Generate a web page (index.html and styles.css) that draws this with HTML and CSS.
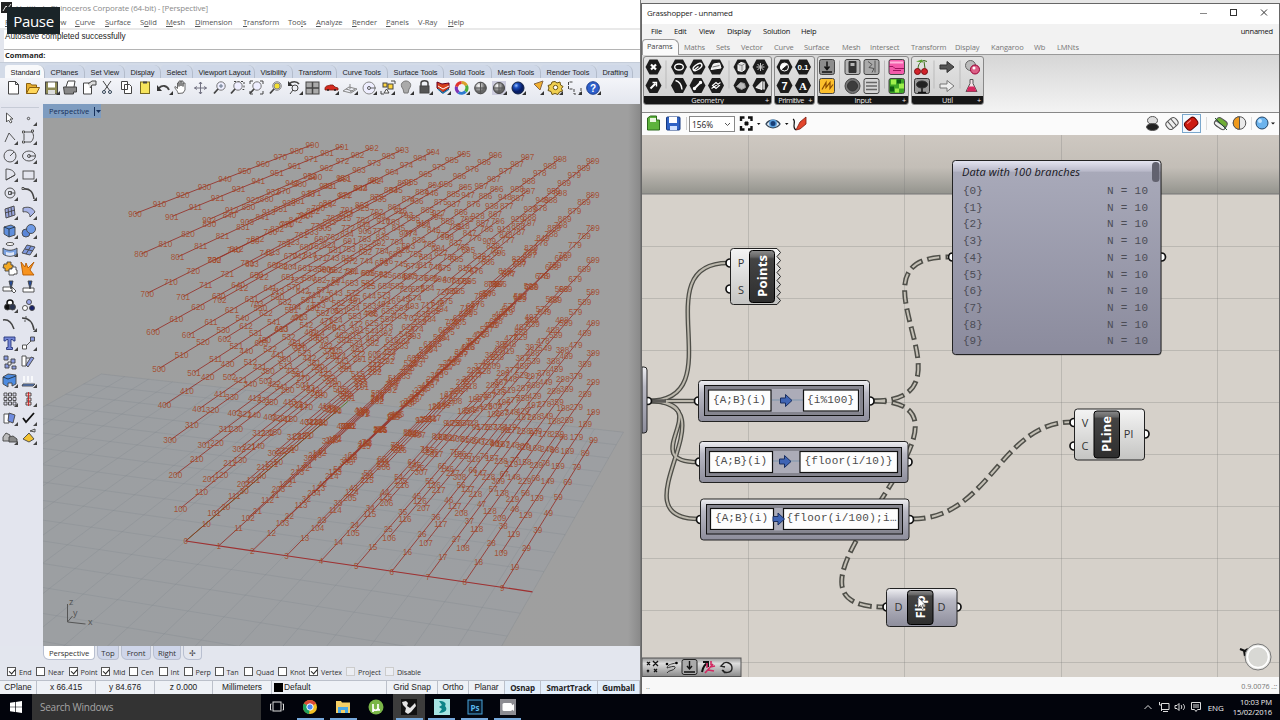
FILE: index.html
```html
<!DOCTYPE html>
<html lang="en">
<head>
  <meta charset="utf-8" />
  <title>Rhinoceros + Grasshopper</title>
  <link rel="stylesheet" href="styles.css">
</head>
<body>
  <div class="desktop">
    <div class="rhino">
      <div class="badge">Pause</div>
      <div class="rh-title"><svg width="11" height="11"><rect width="11" height="11" fill="#222"/><path d="M2 9L5 4l2 2 3-4" stroke="#ddd" fill="none"/></svg><span>Untitled - Rhinoceros Corporate (64-bit) - [Perspective]</span></div>
      <div class="rh-menu">
        <span><u>F</u>ile</span><span><u>E</u>dit</span><span><u>V</u>iew</span><span><u>C</u>urve</span><span><u>S</u>urface</span><span>S<u>o</u>lid</span><span><u>M</u>esh</span><span><u>D</u>imension</span><span><u>T</u>ransform</span><span>Too<u>l</u>s</span><span><u>A</u>nalyze</span><span><u>R</u>ender</span><span><u>P</u>anels</span><span>V-Ray</span><span><u>H</u>elp</span>
      </div>
      <div class="cmd">
        <div class="cmd-log">Autosave completed successfully</div>
        <div class="cmd-line">Command:</div>
      </div>
      <div class="rh-tabs">
        <span class="on">Standard</span><span>CPlanes</span><span>Set View</span><span>Display</span><span>Select</span><span>Viewport Layout</span><span>Visibility</span><span>Transform</span><span>Curve Tools</span><span>Surface Tools</span><span>Solid Tools</span><span>Mesh Tools</span><span>Render Tools</span><span>Drafting</span>
      </div>
      <div class="rh-tools">
        <svg width="636" height="27" viewBox="0 78 636 27" fill="none" stroke="#444">
          <path d="M8.500 81.500h7l3 3v9.500h-10zM15.500 81.500v3h3" fill="#fff"/>
          <path d="M26.500 93.500v-10h4l1 1.500h5v3" fill="#e8b030" stroke="#8a6010"/><path d="M26.500 93.500l3-6h10l-3 6z" fill="#ffd75a" stroke="#8a6010"/>
          <rect x="45.500" y="82" width="12" height="12" fill="#8d8a55"/><rect x="48" y="82.500" width="7" height="5" fill="#fff" stroke="none"/><rect x="48" y="90" width="7" height="4" fill="#ddd" stroke="none"/>
          <path d="M66 87l2-6h7l-1 6" fill="#fff"/><path d="M63.500 87h13v5h-3v2h-9z" fill="#888"/>
          <path d="M83.500 83h8v11h-8z" fill="#fff"/><path d="M88 84l4-3h4v4h-4l-2 3" fill="#ddd"/>
          <path d="M103 81l7 10M111 81l-7 10"/><circle cx="104" cy="92" r="1.500" stroke="#345"/><circle cx="110" cy="92" r="1.500" stroke="#345"/>
          <path d="M121.500 81.500h6v8h-6zM124.500 84.500h5l2 2v7h-7z" fill="#fff"/>
          <rect x="140.500" y="82" width="9" height="11.500" fill="#f6e45c" stroke="#776a20"/><path d="M143 82.500h4" stroke-width="2"/>
          <path d="M159 88c3-3 8-3 10 2" stroke-width="1.800"/><path d="M157 85v6h5z" fill="#333" stroke="none"/>
          <path d="M178 93.500c0-3-4-5-3-7l2.500 2v-5.500l1.500-.5v4-5.500h2v5-5h2v5.500-3.500h2v7l-2 3z" fill="#fff" stroke-width=".8"/>
          <path d="M200.500 82v12M194.500 88h12M199 84l1.500-2 1.500 2M199 92l1.500 2 1.500-2M197 86.500l-2.500 1.500 2.500 1.500M204 86.500l2.500 1.500-2.500 1.500" stroke="#667" stroke-width=".9"/>
          <g id="mag"><circle cx="221" cy="86" r="4.200" fill="#eef" stroke="#777"/><path d="M218 89l-4 4.500" stroke-width="1.800"/></g><path d="M219 86h4M221 84v4" stroke="#678"/>
          <path d="M234 81.500h10v8h-3" stroke-dasharray="2 1.500"/><use href="#mag" x="17"/>
          <path d="M250 84v-3h3M260 81h3v3M263 91v3h-3M253 94h-3v-3"/><use href="#mag" x="36"/>
          <use href="#mag" x="56"/><circle cx="277" cy="86" r="3" fill="#f4e030" stroke="#887"/>
          <path d="M289 84c3-3 8-3 10 0" stroke-width="1.600"/><path d="M288 81v5h5z" fill="#333" stroke="none"/><circle cx="295" cy="88" r="3"/><path d="M293 90l-3 4"/>
          <rect x="306" y="82" width="13" height="12" fill="#aaa"/><path d="M312.500 82v12M306 88h13" stroke-width="1.500"/>
          <path d="M325 88c1-3 4-2 5-3h3l2 2 3 1v2h-13z" fill="#d52b20" stroke="#7a1a10" stroke-width=".8"/><circle cx="328" cy="90" r="1" fill="#222" stroke="none"/><circle cx="335" cy="90" r="1" fill="#222" stroke="none"/>
          <path d="M343 91l6-4 8 2-6 4zM346 89l8 2.500M350 92l5-3M350 84v5" stroke="#888"/>
          <circle cx="369" cy="88" r="6" fill="#eef" stroke="#888"/><circle cx="369" cy="88" r="1.500" stroke="#555"/><path d="M370 88h6" stroke="#666"/>
          <path d="M391 81h4v3M381 91v3h3" /><rect x="383" y="83" width="4" height="4" fill="#ffd640"/><rect x="388" y="84" width="5" height="5" fill="#ffd640"/><path d="M384 93l2.500-4 2.500 4z" fill="#fff"/>
          <path d="M403 89c-4-5 0-8 3-8s7 3 3 8l-1 4h-4z" fill="#aaa" stroke="#777"/>
          <path d="M421 86v-3c0-3 7-3 7 0v3" stroke-width="1.500"/><rect x="420" y="86" width="9" height="7" fill="#555"/>
          <path d="M437 82l5 2 7-1v5l-7 5-5-5z" fill="#d5401c" stroke="#602"/><path d="M438 86l5 3 6-3" stroke="#fff"/><path d="M438 89l5 4 6-4" stroke="#27a" stroke-width="1.500"/>
          <g stroke-width="3"><path d="M461.500 82.500a5.500 5.500 0 0 1 5 3" stroke="#d9a12c"/><path d="M466.500 85.500a5.500 5.500 0 0 1-1 6" stroke="#4caf3c"/><path d="M465.500 91.500a5.500 5.500 0 0 1-7 1" stroke="#2d7bd1"/><path d="M458.500 92.500a5.500 5.500 0 0 1-2-6" stroke="#7a36b8"/><path d="M456.500 86.500a5.500 5.500 0 0 1 5-4" stroke="#e2342c"/></g>
          <circle cx="480.500" cy="88" r="5.800" fill="url(#gball)"/><path d="M480.500 82v12M475 88h11" stroke="#555"/>
          <rect x="492" y="81" width="14" height="14" fill="#ccd" stroke="none"/><circle cx="499" cy="88" r="5.500" fill="url(#gball)"/><path d="M499 82v12M494 88h11" stroke="#555"/>
          <circle cx="518" cy="88" r="6" fill="url(#bball)" stroke="#124"/>
          <path d="M534 84l9-3-3 9z" fill="#f2b030" stroke="#864"/>
          <path d="M555 81.500l2 1.500 3-1 .5 3 2.500 1.500-1.500 2 1 2.500-3 1-1.500 2.500-3-1-3 1-1-3-3-1 1-2.500-1-2.500 3-1 1-2.500z" fill="#f0cf50" stroke="#6b5312"/><circle cx="555.500" cy="87.500" r="2.200" fill="#fff" stroke="#6b5312"/>
          <path d="M572.500 82h-4v7h4M574 89v5h3M581 88v5h-3" stroke-dasharray="3 1"/>
          <circle cx="593" cy="88" r="6.300" fill="#2e5fcb" stroke="#173a8a"/>
          <text x="593" y="92" class="help">?</text>
          <path fill="#333" stroke="none" d="M60 95h-4l4-4zM173 95h-4l4-4zM303 95h-4l4-4zM339 95h-4l4-4zM358 95h-4l4-4zM377 95h-4l4-4zM395 95h-4l4-4zM414 95h-4l4-4zM433 95h-4l4-4zM451 95h-4l4-4zM470 95h-4l4-4zM507 95h-4l4-4zM526 95h-4l4-4zM544 95h-4l4-4zM563 95h-4l4-4zM582 95h-4l4-4zM601 95h-4l4-4z"/>
          <defs>
            <radialGradient id="gball" cx=".35" cy=".3"><stop offset="0" stop-color="#fff"/><stop offset="1" stop-color="#666"/></radialGradient>
            <radialGradient id="bball" cx=".35" cy=".3"><stop offset="0" stop-color="#9cc4ff"/><stop offset=".4" stop-color="#1b4fc0"/><stop offset="1" stop-color="#071d66"/></radialGradient>
          </defs>
        </svg>
      </div>
      <div class="work">
        <div class="side">
          <svg width="43" height="346" viewBox="0 104 43 346" fill="none" stroke="#444" stroke-width=".9">
            <path d="M1 107.500h38" stroke="#c3c7d2"/>
            <path d="M6.500 113v9l2-2 2 3 1.500-1-2-3h3z" fill="#fff"/><circle cx="28.500" cy="118.500" r="1.200"/>
            <path d="M5 142l4-9 6 7"/><path d="M24 132h8M24 142h7M32 132c3 4 1 8-1 10M24 134v6"/><path d="M22.500 131h2v2h-2zM31.500 130h2v2h-2zM22.500 141h2v2h-2z" fill="#fff"/>
            <circle cx="10" cy="156" r="6"/><path d="M10 156l4-4" /><ellipse cx="29" cy="156" rx="6.500" ry="5"/><circle cx="29" cy="156" r="1.500"/><path d="M29 156h6"/>
            <path d="M6 180v-11c6 0 9 3 9 6zM6 180l9-5"/><rect x="23" y="171" width="11" height="8"/>
            <circle cx="10" cy="193" r="5"/><path d="M10 193h5M8.500 191.500h3v3h-3z"/><path d="M23 189c7-1 10 3 11 10" stroke-width="1.600"/><path d="M22 187.500h2v2h-2z" fill="#fff"/>
            <path d="M5 209l9-3 1 9-9 3zM8 208l1 9M11 207l1 9M5 213l10-3" fill="#9aa6dc"/><path d="M23 208c6-2 10 0 12 4l-5 5c0-4-3-6-7-5z" fill="#a7b4e8"/>
            <path d="M4 227l7-2 4 2v8l-6 2-5-3z" fill="#5f8fdd"/><path d="M4 227l5 2 6-2M9 229v8" stroke="#234"/><circle cx="26" cy="233" r="4" fill="#5a86d8"/><circle cx="31" cy="229" r="4.500" fill="#6f9be6"/>
            <ellipse cx="10" cy="244" rx="4" ry="1.500" fill="#fff"/><path d="M3 248c4 3 10 3 14 0v6c-4 3-10 3-14 0z" fill="#7ba3e2"/><path d="M6 252c3 1 5 1 8 0v3c-3 1-5 1-8 0z" fill="#dfe7f7" stroke="none"/><path d="M22 253l5-8 8 2-5 8z" fill="#7f98dc"/><path d="M25 249l8 2M31 246l-5 8"/>
            <path d="M4 264h3v-2h4v3h2v4h-3v2H5v-3H3z" fill="#f2a823"/><path d="M9 269h3v-2h4v3h1v4h-3v1h-5z" fill="#fff"/><path d="M21 262l4 5 1-4 2 5 6-6-4 8 4 5H23z" fill="#f7931e" stroke="#b55a00"/>
            <path d="M3 287h9v4H3zM12 287l4 4-2 2-3-3" fill="#fff"/><path d="M9 281h4l-2 8z" fill="#234a9a"/><path d="M23 288h11v4H23z" fill="#fff"/><path d="M28 281h4l-2 8z" fill="#234a9a"/>
            <circle cx="10" cy="303" r="3" fill="#fff" stroke="#111" stroke-width="1.500"/><circle cx="7.500" cy="307" r="3" fill="#111"/><circle cx="12.500" cy="307" r="3" fill="#2b3550"/><circle cx="29" cy="302" r="2.500" fill="#9aa6e8"/><circle cx="25" cy="308" r="2.500" fill="#fff"/><circle cx="32" cy="308" r="2.500" fill="#16206a"/>
            <path d="M3 320c6-1 9 3 11 9" stroke-width="1.500"/><path d="M22 318c8 0 11 5 12 12" stroke-width="1.500"/><path d="M25 317h2M24 321h2"/>
            <path d="M4 337h11v4h-1.500l-1-1.500H11v8h1.500v2h-6v-2H8v-8H6.500l-1 1.500H4z" fill="#7587d8" stroke="#26357a"/><path d="M25 347l6-6"/><path d="M22.500 345h4v4h-4z" fill="#fff"/><path d="M30.500 337h4v4h-4z" fill="#8a9be0"/>
            <path d="M4 356h4v4H4zM11 359h4v4h-4zM5 364h4v4H5zM12 366h4v3h-4z" fill="#8a9be0"/><path d="M8 362h3v3H8z" fill="#fff"/><path d="M22 356h4v10h-4zM26 358h4" fill="#fff"/><path d="M34 358l-6 9-2-2 5-8z" fill="#8a9be0"/>
            <path d="M3 377l5-3 8 1v9l-4 2v-3H8v4l-5-3z" fill="#4d8be0"/><path d="M3 377l5 2 8-3" stroke="#234"/><path d="M23 384h12l-2 2H22z" fill="#5a86d8"/><path d="M24 382v-6M28 382v-6M32 382v-6" stroke="#fff" stroke-width="1.500"/>
            <path d="M4 393h3v3H4zM8.500 393h3v3h-3zM13 393h3v3h-3zM4 397.500h3v3H4zM8.500 397.500h3v3h-3zM13 397.500h3v3h-3zM4 402h3v3H4zM8.500 402h3v3h-3zM13 402h3v3h-3z" fill="#dde"/><path d="M26 393h5v3h-5zM27 398h4v3h-4zM26 402h5v3h-5z" fill="#fbb" /><path d="M28.500 392v14" stroke="#c22"/>
            <path d="M4 414h5v9H4z" fill="#fff"/><path d="M9 413l6 2-2 8-5-2z" fill="#6f8ce0"/><path d="M23 418l3 4 8-9" stroke="#111" stroke-width="1.800"/>
            <path d="M3 441v-4l3-4 4 2v6z" fill="#bbb"/><path d="M9 442v-5l4-1 4 3v3z" fill="#888"/><path d="M23 439l6-6 5 6-5 3z" fill="#f2c230"/><path d="M30 431l5-2v3z" fill="#ddd"/>
            <path fill="#444" stroke="none" d="M37 126v-4l-4 4zM18 145v-4l-4 4zM37 145v-4l-4 4zM18 164v-4l-4 4zM37 164v-4l-4 4zM18 182v-4l-4 4zM37 182v-4l-4 4zM18 201v-4l-4 4zM37 201v-4l-4 4zM18 220v-4l-4 4zM37 220v-4l-4 4zM18 239v-4l-4 4zM37 239v-4l-4 4zM18 257v-4l-4 4zM37 257v-4l-4 4zM18 313v-4l-4 4zM37 332v-4l-4 4zM18 351v-4l-4 4zM37 351v-4l-4 4zM18 388v-4l-4 4zM37 388v-4l-4 4zM18 407v-4l-4 4zM37 407v-4l-4 4zM18 426v-4l-4 4zM37 426v-4l-4 4zM18 445v-4l-4 4zM37 445v-4l-4 4z"/>
          </svg>
        </div>
        <div class="viewport">
          <div class="vp-label">Perspective<svg width="8" height="9"><path d="M.5 0v9" stroke="#16305a"/><path d="M2 3h5L4.500 6z" fill="#16305a"/></svg></div>
          <svg class="scene" id="scene" width="598" height="542" viewBox="43 104 598 542"></svg>
        </div>
      </div>
      <div class="view-tabs"><span class="on">Perspective</span><span>Top</span><span>Front</span><span>Right</span><span class="plus">✢</span></div>
      <div class="osnap">
        <label><b class="ck"></b>End</label><label><b></b>Near</label><label><b class="ck"></b>Point</label><label><b class="ck"></b>Mid</label><label><b></b>Cen</label><label><b></b>Int</label><label><b></b>Perp</label><label><b></b>Tan</label><label><b></b>Quad</label><label><b></b>Knot</label><label><b class="ck"></b>Vertex</label><label><b class="off"></b>Project</label><label><b class="off"></b>Disable</label>
      </div>
      <div class="rh-status">
        <span>CPlane</span><span>x 66.415</span><span>y 84.676</span><span>z 0.000</span><span>Millimeters</span><span class="layer"><i></i>Default</span><span>Grid Snap</span><span>Ortho</span><span>Planar</span><span class="b">Osnap</span><span class="b">SmartTrack</span><span class="b">Gumball</span>
      </div>
    </div>

    <div class="gh">
      <div class="gh-title"><span>Grasshopper - unnamed</span>
        <svg width="80" height="18" viewBox="1199 4 80 18" fill="none" stroke="#333"><path d="M1200 13.500h7" stroke="#888"/><rect x="1230.500" y="9.500" width="6" height="6"/><path d="M1261 9.500l6 6M1267 9.500l-6 6"/></svg>
      </div>
      <div class="gh-menu"><span>File</span><span>Edit</span><span>View</span><span>Display</span><span>Solution</span><span>Help</span><span class="doc">unnamed</span></div>
      <div class="gh-tabs"><span class="on">Params</span><span>Maths</span><span>Sets</span><span>Vector</span><span>Curve</span><span>Surface</span><span>Mesh</span><span>Intersect</span><span>Transform</span><span>Display</span><span>Kangaroo</span><span>Wb</span><span>LMNts</span></div>
      <div class="ribbon">
        <div class="panel geo">
          <svg width="126" height="39" viewBox="644.5 56.5 126 39" fill="none" stroke="#fff" stroke-width="1.400">
            <defs><path id="hex" d="M-8 0l4-7.500h8l4 7.500-4 7.500h-8z" fill="#1c1c1c" stroke="none"/></defs>
            <path d="M666.500 60v28M729.500 60v28" stroke="#bbb" stroke-width="1"/>
            <use href="#hex" x="654" y="66.500"/><use href="#hex" x="679.500" y="66.500"/><use href="#hex" x="698" y="66.500"/><use href="#hex" x="716.500" y="66.500"/><use href="#hex" x="742" y="66.500"/><use href="#hex" x="761" y="66.500"/>
            <use href="#hex" x="654" y="85"/><use href="#hex" x="679.500" y="85"/><use href="#hex" x="698" y="85"/><use href="#hex" x="716.500" y="85"/><use href="#hex" x="742" y="85"/><use href="#hex" x="761" y="85"/>
            <path d="M651.500 64l5 5M656.500 64l-5 5" stroke-width="2.200"/><ellipse cx="679.500" cy="66.500" rx="4.300" ry="3"/><ellipse cx="698" cy="66.500" rx="5" ry="2.500" transform="rotate(-35 698 66.500)"/><path d="M694 70l5-4"/><path d="M711.500 69l2.500-5.500 6-1 1.500 5z" fill="#eee" stroke-width="1"/><path d="M713 66.500l7-1.500" stroke="#555" stroke-width=".8"/><path d="M738.500 64l3-2 4 1v6l-3 2-4-1z" fill="#ddd" stroke-width="1"/><path d="M742.500 65v6M738.500 64l4 1 3-2" stroke="#777" stroke-width=".8"/><path d="M757 66.500h8M761 62.500v8M758 63.500l6 6M764 63.500l-6 6" stroke="#ccc" stroke-width="1"/>
            <path d="M651 88l5-5" stroke-width="2"/><path d="M653 82h4v4"/><path d="M676 80c4 1 6 4 6.500 9"/><path d="M695 88l6-6" stroke-width="1.800"/><circle cx="695" cy="88" r="1" fill="#fff"/><circle cx="701" cy="82" r="1" fill="#fff"/><path d="M713 85l3.500-3 3.500 3-3.500 3zM712 88l9-6" stroke-width="1.100"/><path d="M737 86l4-4 4 1 1 4-4 2z" fill="#bbb" stroke="#999" stroke-width="1"/><path d="M756.500 87l6-6v8z" fill="#ddd" stroke-width="1"/><path d="M764.500 81v8"/>
          </svg>
          <div class="cap">Geometry<i>+</i></div>
        </div>
        <div class="panel prim">
          <svg width="39" height="39" viewBox="775 56.500 39 39" fill="none" stroke="#fff">
            <use href="#hex" x="784.500" y="66.500"/><use href="#hex" x="803" y="66.500"/><use href="#hex" x="784.500" y="85"/><use href="#hex" x="803" y="85"/>
            <circle cx="784.500" cy="66.500" r="4"/><path d="M781 69a4 4 0 0 1 6-5z" fill="#fff"/><g class="hexchar"><text x="803" y="69.500">0.1</text><text x="784.500" y="89" class="big">7</text><text x="803" y="89" class="ser">A</text></g>
          </svg>
          <div class="cap">Primitive<i>+</i></div>
        </div>
        <div class="panel inp">
          <svg width="90" height="39" viewBox="818 56.500 90 39" fill="none" stroke="#333">
            <path d="M839.500 60v28M884.500 60v28" stroke="#bbb"/>
            <g fill="#b5b5b5" stroke="#444"><rect x="819.500" y="59" width="15" height="15" rx="2" fill="#8c8c8c"/><rect x="845" y="59" width="15" height="15" rx="2"/><rect x="864" y="59" width="15" height="15" rx="2" fill="#aaa"/><rect x="889" y="59" width="15.500" height="15" rx="2" fill="#f45bab"/><rect x="819.500" y="78" width="15" height="15" rx="2" fill="#fcbf2c"/><circle cx="852.500" cy="85.500" r="7.500" fill="#777"/><rect x="864" y="78" width="15" height="15" rx="2" fill="#d5d5d5"/><rect x="889" y="78" width="15.500" height="15" rx="2" fill="#3da526"/></g>
            <path d="M827 61v7M824.500 66l2.500 3 2.500-3M822 71.500h10" stroke="#111" stroke-width="1.500"/><path d="M849 61v11h7V61zM850 62h5v4h-5z" fill="#333"/><path d="M868 61l4 3-3 3 5 1-2 4M875 60v12" stroke="#555"/><path d="M889 66h4l2 2h9M893 70h8" stroke="#a01560"/><path d="M890 62h13" stroke="#ffb5dc" stroke-width="2"/>
            <path d="M822 89l4-7v5l4-5v6l3-4" stroke="#8a4a00" stroke-width="1.200"/><circle cx="852.500" cy="85.500" r="5" fill="#3c3c3c"/><path d="M866 82h11M866 85.500h11M866 89h11" stroke="#666" stroke-width="1.500"/><path d="M891 79h5v5h-5zM899 83h5v5h-5zM895 88h4v4h-4z" fill="#9df04c" stroke="none"/><path d="M897 79h4v4h-4zM890 86h4v5h-4z" fill="#0b5a12" stroke="none"/>
          </svg>
          <div class="cap">Input<i>+</i></div>
        </div>
        <div class="panel util">
          <svg width="71" height="39" viewBox="911 56.500 71 39" fill="none" stroke="#333">
            <path d="M933 60v28M959 60v28" stroke="#bbb"/>
            <path d="M917 69c0-5 2-8 6-9l3 1M923 61l1 7" stroke="#3b6a1c"/><circle cx="916.500" cy="71" r="3" fill="#d2222a" stroke="#7a0d12"/><circle cx="923.500" cy="71" r="3" fill="#d2222a" stroke="#7a0d12"/><path d="M915 61l6-2 1 3z" fill="#59a02c" stroke="none"/>
            <path d="M939 64.500h7V61l7 5.500-7 5.500v-3.500h-7z" fill="#555"/><path d="M939 83.500h7V80l7 5.500-7 5.500v-3.500h-7z" fill="#eee" stroke="#777"/>
            <circle cx="969.500" cy="65" r="5" fill="#bbb" stroke="#666"/><circle cx="974" cy="69" r="4.500" fill="#dc5f86" stroke="#903"/><circle cx="973" cy="67.500" r="1.500" fill="#fff" stroke="none"/>
            <rect x="913.500" y="78" width="15" height="15" rx="2" fill="#9a9a9a"/><path d="M921 92v-6M917 92h8" stroke="#111" stroke-width="1.500"/><ellipse cx="921" cy="84" rx="5.500" ry="3.500" fill="#222"/>
            <path d="M969 79v4l-4 8h11l-4-8v-4z" fill="#f3dfe5" stroke="#555"/><path d="M967.500 86l-2 5h10l-2-5z" fill="#d6285f" stroke="none"/>
          </svg>
          <div class="cap">Util<i>+</i></div>
        </div>
      </div>
      <div class="gh-bar">
        <svg width="45" height="20" viewBox="642 114 45 20"><path d="M647.500 130v-12l3-2h6v4h3v10z" fill="#5db33c" stroke="#2d6a1c"/><path d="M650 118h6v4h-6z" fill="#e8f6e0"/><rect x="666.500" y="117" width="13.500" height="13" rx="1" fill="#2f62c4" stroke="#143880"/><path d="M669 117h8v6h-8z" fill="#fff"/><path d="M670 126h7v4h-7z" fill="#cfe0ff"/><path d="M686.500 117v13" stroke="#ccc"/></svg>
        <div class="zoom">156%<svg width="7" height="5"><path d="M1 1l2.500 2.500L6 1" fill="none" stroke="#555"/></svg></div>
        <svg width="75" height="20" viewBox="737 114 75 20" fill="none" stroke="#111" stroke-width="2"><path d="M741 121v-3.500h3.500M748 117.500h3.500v3.500M751.500 126v3.500H748M744.500 129.500H741V126" stroke-width="2.400"/><path d="M745 122h3v3h-3z" fill="#111" stroke-width="1"/><path d="M757 123h3.500l-1.800 2zM785 123h3.500l-1.800 2z" fill="#111" stroke="none"/><path d="M766 124c3-5 11-5 14 0-3 5-11 5-14 0z" fill="#dce9f7" stroke="#345" stroke-width="1.400"/><circle cx="773" cy="123.500" r="3.200" fill="#173f78" stroke="#5aa0dd" stroke-width="1.400"/><path d="M793 119c4 2-2 8 3 11" stroke-width="1.200"/><path d="M796 130l4-8 6-5v7l-6 5z" fill="#e3462c" stroke="#7a1a10" stroke-width=".8"/></svg>
        <svg class="right" width="136" height="20" viewBox="1143 114 136 20" stroke="#555">
          <ellipse cx="1152.500" cy="120.500" rx="5" ry="4" fill="#ddd"/><ellipse cx="1152.500" cy="127" rx="6" ry="3.500" fill="#222"/>
          <g transform="rotate(-40 1172 123.500)"><rect x="1166" y="119" width="12" height="9" rx="3.500" fill="#eee"/><path d="M1170 119v9M1174 119v9"/></g>
          <rect x="1182.500" y="114.500" width="18" height="18" fill="#f3f9ff" stroke="#7aa7cc"/><g transform="rotate(-40 1191 123.500)"><rect x="1184.500" y="119" width="13" height="9.500" rx="3.500" fill="#cc1c12" stroke="#600"/><path d="M1188 121h5" stroke="#f88"/></g>
          <path d="M1206.500 117v13M1251.500 117v13" stroke="#ddd"/>
          <g transform="rotate(35 1221 123.500)"><rect x="1215" y="119" width="12" height="9" rx="3.500" fill="#6fae35"/><path d="M1215 124h12v2q0 2-3 2h-6q-3 0-3-2z" fill="#eee"/></g><path d="M1215 118l12 12" stroke="#253"/>
          <circle cx="1239.500" cy="123" r="6.300" fill="#e9e9e9"/><path d="M1239.500 116.700a6.300 6.300 0 0 0 0 12.600z" fill="#f09a1c"/>
          <circle cx="1262" cy="123" r="6" fill="#6cb4ee" stroke="#246"/><circle cx="1260" cy="121" r="2" fill="#c5e5ff" stroke="none"/><path d="M1271 122.500h4l-2 2z" fill="#111" stroke="none"/>
        </svg>
      </div>
      <div class="canvas">
        <svg width="637" height="542" viewBox="642 135 637 542">
          <defs>
            <linearGradient id="edge" x2="0" y2="1"><stop offset="0" stop-color="#cec8c1"/><stop offset=".55" stop-color="#c3beb7"/><stop offset="1" stop-color="#93938d"/></linearGradient>
            <linearGradient id="sel" x2="0" y2="1"><stop offset="0" stop-color="#f0f0f3"/><stop offset=".3" stop-color="#b9b9c4"/><stop offset="1" stop-color="#8d8d9b"/></linearGradient>
            <linearGradient id="pan" x2="0" y2="1"><stop offset="0" stop-color="#e6e6f2"/><stop offset=".055" stop-color="#b9b9c9"/><stop offset=".06" stop-color="#a8a9b9"/><stop offset="1" stop-color="#8b8b9d"/></linearGradient>
            <linearGradient id="comp" x2="0" y2="1"><stop offset="0" stop-color="#f4f4f4"/><stop offset="1" stop-color="#c4c4c2"/></linearGradient>
            <linearGradient id="blk" x2="0" y2="1"><stop offset="0" stop-color="#8c8c8c"/><stop offset=".12" stop-color="#666"/><stop offset=".16" stop-color="#444"/><stop offset="1" stop-color="#2e2e2e"/></linearGradient>
            <linearGradient id="mbar" x2="0" y2="1"><stop offset="0" stop-color="#999"/><stop offset=".3" stop-color="#ddd"/><stop offset="1" stop-color="#8a8a8a"/></linearGradient>
            <path id="arrow" d="M-5.500-2.500h5V-6L6 0-.5 6V2.500h-5z" fill="#3f64b4" stroke="#1a2f60"/>
            <path id="w1" d="M648 401C735 401 642 263 728 263"/><path id="w2" d="M648 401h50"/><path id="w3" d="M648 401C722 401 633 462 698 462"/><path id="w4" d="M648 401C738 401 612 519 699 519"/>
            <path id="d1" d="M873 401C986 401 838 257 948 257"/><path id="d2" d="M873 401C1015 401 742 607 884 607"/><path id="d3" d="M912 519C990 519 1000 422 1072 422"/>
          </defs>
          <path class="grid" d="M748.500 135v542M904.500 135v542M1061.500 135v542M1217.500 135v542M642 246.500h637M642 298.500h637M642 350.500h637M642 402.500h637M642 454.500h637M642 506.500h637M642 558.500h637M642 610.500h637M642 662.500h637"/>
          <rect x="642" y="135" width="637" height="59" fill="url(#edge)"/><path d="M642 194h637" stroke="#777"/><path class="grid" d="M748.500 135v59M904.500 135v59M1061.500 135v59M1217.500 135v59"/>

          <g class="wire"><use href="#w1"/><use href="#w2"/><use href="#w3"/><use href="#w4"/></g>
          <g class="wire in"><use href="#w1"/><use href="#w2"/><use href="#w3"/><use href="#w4"/></g>
          <path d="M648 401h18" stroke="#333" stroke-width="3.500" opacity=".7"/>
          <g class="wire dash"><use href="#d1"/><use href="#d2"/><use href="#d3"/></g>
          <g class="wire in dash"><use href="#d1"/><use href="#d2"/><use href="#d3"/></g>

          <g class="grips"><circle cx="648" cy="401" r="3.500"/><circle cx="730" cy="263" r="4"/><circle cx="730" cy="289" r="4"/><circle cx="698.500" cy="401" r="4"/><circle cx="870" cy="401" r="4"/><circle cx="699.500" cy="462" r="4"/><circle cx="908" cy="462" r="4"/><circle cx="700.500" cy="519.500" r="4"/><circle cx="909.500" cy="519.500" r="4"/><circle cx="887" cy="607" r="4"/><circle cx="957" cy="607" r="4"/><circle cx="1074" cy="422.500" r="4"/><circle cx="1074" cy="446" r="4"/><circle cx="1145" cy="434" r="4"/><circle cx="952.500" cy="257" r="4"/><circle cx="1161.500" cy="257" r="4"/></g>

          <path d="M642 367h2q3 0 3 3v60q0 3-3 3h-2z" fill="url(#sel)" stroke="#222"/>

          <path d="M733.500 248.500H777l3.500 4-3.500 4 3.500 4-3.500 4 3.500 4-3.500 4 3.500 4-3.500 4 3.500 4-3.500 4 3.500 4-3.500 4 3.500 4-3.500 4H733.500q-3 0-3-3v-50q0-3 3-3z" fill="url(#comp)" stroke="#222"/>
          <rect x="749.500" y="250.500" width="25" height="52" rx="3" fill="url(#blk)" stroke="#000"/>
          <g class="port"><text x="741" y="267">P</text><text x="741" y="293.500">S</text></g>
          <text class="comp" transform="translate(766.500 276) rotate(-90)" textLength="42">Points</text>

          <g stroke="#222" fill="url(#sel)"><rect x="698.500" y="380.500" width="171" height="41" rx="3"/><rect x="699.500" y="441.500" width="208.500" height="41" rx="3"/><rect x="700.500" y="499" width="208.500" height="41" rx="3"/></g>
          <g stroke="#111" fill="#85858f"><rect x="704.500" y="385.500" width="159" height="30"/><rect x="705.500" y="447.500" width="196" height="29"/><rect x="706.500" y="504.500" width="196" height="29.500"/></g>
          <g fill="#acacb8"><rect x="708" y="389" width="152" height="23"/><rect x="709" y="451" width="189" height="22"/><rect x="710" y="508" width="189" height="22.500"/></g>
          <path d="M772 400h31M773 461h27" stroke="#7d95ad"/>
          <g fill="#fdfdfd" stroke="#111" stroke-width="1.200"><rect x="708.500" y="390" width="62.500" height="21"/><rect x="803.500" y="390" width="55" height="21"/><rect x="709.500" y="451.500" width="63" height="21"/><rect x="800" y="451.500" width="97.500" height="21"/><rect x="710.500" y="508.500" width="63" height="21"/><rect x="783.500" y="508.500" width="115" height="21"/></g>
          <use href="#arrow" x="786" y="400.500"/><use href="#arrow" x="785" y="461.500"/><use href="#arrow" x="778.500" y="519"/>
          <g class="mono"><text x="713" y="403" textLength="53">{A;B}(i)</text><text x="807" y="403" textLength="47">{i%100}</text><text x="714" y="464" textLength="53">{A;B}(i)</text><text x="804.500" y="464" textLength="88">{floor(i/10)}</text><text x="715" y="521" textLength="53">{A;B}(i)</text><text x="786.500" y="521" textLength="110">{floor(i/100);i…</text></g>

          <rect x="886.500" y="588.500" width="70.500" height="38" rx="3" fill="url(#sel)" stroke="#222"/><rect x="907.500" y="590.500" width="25.500" height="34" rx="3" fill="url(#blk)" stroke="#000"/>
          <g class="port"><text x="898.500" y="611">D</text><text x="941.500" y="611">D</text></g>
          <text class="comp" transform="translate(925 607) rotate(-90)" textLength="23">Flip</text>
          <path d="M918 597v11l2.500-2.500 2 4 1.500-1-2-3.500h3.500z" fill="#fff" stroke="#333" stroke-width=".6"/>

          <rect x="1074.500" y="409" width="70" height="51" rx="3" fill="url(#comp)" stroke="#222"/><rect x="1094" y="411" width="25.500" height="47" rx="3" fill="url(#blk)" stroke="#000"/>
          <g class="port"><text x="1085" y="426.500">V</text><text x="1085" y="450">C</text><text x="1128.500" y="438">Pl</text></g>
          <text class="comp" transform="translate(1111 434) rotate(-90)" textLength="36">PLine</text>

          <rect x="953.500" y="161.500" width="208" height="194" rx="3" fill="#000" opacity=".25"/>
          <rect x="952.500" y="160.500" width="208.500" height="194" rx="3" fill="url(#pan)" stroke="#222"/>
          <rect x="1152" y="162" width="7.500" height="20" rx="3.500" fill="#62626f"/>
          <text class="ptitle" x="962" y="176" textLength="118">Data with 100 branches</text>
          <g class="mono pdata" id="branches"></g>

          <g class="mb"><rect x="642" y="658" width="99" height="18.500" fill="url(#mbar)" stroke="#555"/>
            <path d="M647 662l3 3M650 662l-3 3M653 661l5 5M658 661l-5 5M647 670l2 2M654 669l3 3M657 669l-3 3M649 670l-2 2" stroke="#111" stroke-width="1.300"/>
            <path d="M667 673c1-3 7-2 8-5s-5-1-8 0c1-4 5-4 9-5" stroke="#333" fill="none"/><circle cx="676.500" cy="663" r="1.300"/><circle cx="667" cy="664" r="1.300"/>
            <rect x="682" y="659.500" width="15" height="15" rx="2" fill="#aaa" stroke="#222"/><path d="M689.500 661v7M687 666l2.500 3 2.500-3M684 672h11" stroke="#111" fill="none" stroke-width="1.400"/>
            <path d="M702 672c1-5 3-8 6-9M703 662l5 0v5" stroke="#111" stroke-width="2" fill="none"/><path d="M705 673l8-9M708 670l6 1M710 667l5-1M707 668v-5M711 665v-4" stroke="#d22a62" stroke-width="1.600"/>
            <path d="M722 665c3-5 10-2 10 3s-8 6-9 2M724 663l-3 3 4 1M725 673l-3-3" stroke="#222" fill="none" stroke-width="1.400"/></g>
          <path d="M1240 649l5 2 3-2M1244 650l1 6M1246 652l6-5" stroke="#111" stroke-width="2.200" fill="none"/>
          <circle cx="1258" cy="657" r="13" fill="#e9e9e6" stroke="#777"/><circle cx="1258" cy="657" r="10.500" fill="#d8d8d4" stroke="#fff" stroke-width="1.500"/>
        </svg>
      </div>
      <div class="gh-status"><span>..</span><span>0.9.0076 <em>.::</em></span></div>
    </div>
  </div>

  <div class="taskbar">
    <div class="start"><svg width="12" height="12" fill="#fff"><path d="M0 1.700l5-.7v4.700H0zM5.700.9L12 0v5.700H5.700zM0 6.300h5V11l-5-.7zM5.700 6.300H12V12l-6.300-.9z"/></svg></div>
    <div class="search">Search Windows</div>
    <div class="apps">
      <div class="app"><svg width="16" height="16" fill="none" stroke="#ddd"><rect x="4" y="3" width="8" height="9"/><path d="M2.500 5h-1v6h1M13.500 5h1v6h-1"/></svg></div>
      <div class="app run"><svg width="16" height="16"><circle cx="8" cy="8" r="7" fill="#f2c022"/><path d="M8 8L1.900 4.500A7 7 0 0 1 14.100 4.500z" fill="#dc4a38"/><path d="M8 8L1.900 4.500A7 7 0 0 0 7 15z" fill="#1fa15d"/><circle cx="8" cy="8" r="3.200" fill="#4a8af4" stroke="#fff"/></svg></div>
      <div class="app run"><svg width="16" height="16"><path d="M1 2h5l1 1.500h8V14H1z" fill="#f5cf66"/><path d="M3 14V8h10v6h-3v-3H6v3z" fill="#4aa8e6"/></svg></div>
      <div class="app"><svg width="16" height="16"><circle cx="8" cy="8" r="7.500" fill="#7ab648"/><path d="M5 13V5v4c0 3 5 3 5 0V5M10 9c0 2 1 2 2 2" stroke="#fff" stroke-width="1.700" fill="none"/></svg></div>
      <div class="app run cur"><svg width="16" height="16"><rect width="16" height="16" fill="#111"/><path d="M1 3l4-1 2 2-1 3 3 2 5-5 1 3-5 6-3 2-3-2 1-4-3-3z" fill="#e4e4e4"/></svg></div>
      <div class="app run"><svg width="16" height="16"><rect width="16" height="16" fill="#a6e3e2"/><path d="M5 2c5 0 8 2 6 5 3 3 1 7-6 7l3-4-3-2 3-2z" fill="#0b8387"/></svg></div>
      <div class="app run"><svg width="16" height="16"><rect x="1" y="1" width="14" height="14" fill="#071a2c" stroke="#4aa6dd"/><text x="8" y="11.500" class="ps">Ps</text></svg></div>
      <div class="app run"><svg width="16" height="16"><rect width="16" height="16" fill="#8c8c92"/><rect x="2.500" y="4" width="9.500" height="8" rx="1.500" fill="#fff"/><path d="M11 7l3-2v7l-3-2z" fill="#fff"/></svg></div>
    </div>
    <div class="tray">
      <svg width="60" height="16" viewBox="1143 699 60 16" fill="none" stroke="#ddd"><path d="M1144.500 709l3.500-3.500 3.500 3.500"/><path d="M1161.500 703.500h7.500v6h-7.500zM1163 711.500h5M1159.500 702v3h2v6" /><path d="M1175 705.500h2l2-2v7l-2-2h-2zM1181 705c1 1 1 3 0 4M1183 704c2 2 2 4 0 6"/><path d="M1191.500 702.500h9v7h-3l-1.500 2-1.500-2h-3zM1193 705h6M1193 707h6"/></svg>
      <span class="lang">ENG</span>
      <span class="clock">10:03 PM<br>15/02/2016</span>
    </div>
  </div>

  <script>
    const NS = "http://www.w3.org/2000/svg";
    const scene = document.getElementById("scene");

    function add(parent, tag, attrs, text) {
      const el = document.createElementNS(NS, tag);
      for (const k in attrs) el.setAttribute(k, attrs[k]);
      if (text !== undefined) el.textContent = text;
      parent.appendChild(el);
      return el;
    }

    // perspective camera: model units -> screen
    function project(x, y, z) {
      const w = 1 - 0.00727 * x + 0.02879 * y - 0.0121 * z;
      return [
        (185.7 + 31.52 * x + 26.56 * y - 7.267 * z) / w,
        (541 + 0.878 * x - 2.68 * y - 38.95 * z) / w
      ];
    }
    function seg(a, b) {
      const p = project(...a), q = project(...b);
      return `M${p[0].toFixed(1)} ${p[1].toFixed(1)}L${q[0].toFixed(1)} ${q[1].toFixed(1)}`;
    }

    // construction plane
    const G = 9.8;
    let grid = "";
    for (let i = -10; i <= 10; i++) {
      const v = i * 0.98;
      grid += seg([v, -G, 0], [v, G, 0]) + seg([-G, v, 0], [G, v, 0]);
    }
    const corners = [[-G, -G], [G, -G], [G, G], [-G, G]].map(c => project(c[0], c[1], 0).join(","));
    add(scene, "polygon", { points: corners.join(" "), class: "plane" });
    add(scene, "path", { d: grid, class: "cgrid" });
    add(scene, "path", { d: seg([0, 0, 0], [0, G, 0]), class: "yaxis" });
    add(scene, "path", { d: seg([0, 0, 0], [G, 0, 0]), class: "xaxis" });

    // polylines through each row, then the point indices
    for (let z = 0; z < 10; z++)
      for (let x = 0; x < 10; x++)
        add(scene, "path", { d: seg([x, 0, z], [x, 9, z]), class: "pl" });
    const pts = add(scene, "g", { class: "pts" });
    for (let n = 0; n < 1000; n++) {
      const p = project(n % 10, Math.floor(n / 10) % 10, Math.floor(n / 100));
      add(pts, "text", { x: p[0].toFixed(1), y: (p[1] + 3.3).toFixed(1) }, n);
    }

    const ax = add(scene, "g", { class: "gizmo" });
    add(ax, "path", { d: "M67.500 622v-18M67.500 622l18 2M67.500 622l5-6" });
    add(ax, "text", { x: 69, y: 605 }, "z");
    add(ax, "text", { x: 73, y: 616 }, "y");
    add(ax, "text", { x: 88, y: 625 }, "x");

    const br = document.getElementById("branches");
    for (let i = 0; i < 10; i++) {
      const y = 194 + i * 16.7;
      add(br, "text", { x: 963, y: y }, `{${i}}`);
      add(br, "text", { x: 1107, y: y, textLength: 41 }, "N = 10");
    }
  </script>
</body>
</html>
```
FILE: styles.css
```css
* { box-sizing: border-box; }
body { margin: 0; width: 1280px; height: 720px; overflow: hidden; font-family: "Open Sans", "Noto Sans", sans-serif; font-size: 8px; color: #222; background: #e6e6e6; }
svg { display: block; flex: none; }
span, label { white-space: nowrap; }
.desktop { display: flex; height: 694px; }

/* Rhino */
.rhino { position: relative; width: 641px; height: 694px; display: flex; flex-direction: column; background: #e3e6ee; border-right: 1px solid #777; }
.badge { position: absolute; left: 7px; top: 7px; width: 53px; height: 27px; background: #1a2428; color: #fff; font-size: 15px; letter-spacing: -.3px; line-height: 29px; text-align: center; z-index: 3; }
.rh-title { height: 15px; display: flex; align-items: center; gap: 4px; padding-left: 1px; background: #fff; color: #8a8a8a; font-size: 8px; letter-spacing: -.17px; line-height: 15px; }
.rh-menu { height: 15px; display: grid; grid-template-columns: 21px 24px 25px 30px 35px 26px 29px 48px 45px 28px 36px 34px 32px 30px 30px; padding-left: 5px; background: #fff; border-bottom: 2px solid #e9e9e9; color: #555; font-size: 7.600px; letter-spacing: -.1px; line-height: 14px; }
.cmd { height: 32px; background: #fff; margin-left: 4px; font-family: "Liberation Sans", sans-serif; font-size: 8.200px; color: #222; }
.cmd-log { height: 20px; line-height: 13px; border-bottom: 1px solid #b4b4b4; padding-left: 1px; }
.cmd-line { font: bold 7.500px/11px "Open Sans", sans-serif; padding-left: 1px; }
.rh-tabs { height: 16px; padding: 2px 0 0 5px; display: grid; grid-template-columns: 40px 40px 40px 36px 32px 62px 38px 44px 51px 56px 48px 49px 56px 36px; align-items: end; background: #d3dbe8; border-top: 1px solid #c4ccd8; }
.rh-tabs span { height: 13px; padding-left: 5.500px; font: 7.400px/15px "Liberation Sans", sans-serif; letter-spacing: -.05px; color: #222; border-right: 1px solid #b3bccb; border-radius: 3px 7px 0 0; background: #cfd8e8; }
.rh-tabs .on { background: #f8f9fb; }
.rh-tools { height: 26px; background: linear-gradient(#f4f5f9, #e3e6ee); }
.help { font: bold 10px "Liberation Sans", sans-serif; fill: #fff; stroke: none; text-anchor: middle; }
.work { height: 542px; display: flex; }
.side { width: 43px; background: #e3e5ee; }
.viewport { position: relative; flex: 1; overflow: hidden; background: linear-gradient(90deg, #9e9f9f, #9f9f9f 98%, #8a8a8a); }
.scene { position: absolute; left: 0; top: 0; }
.vp-label { width: 58px; height: 14px; padding-left: 6px; background: #7e9cc0; color: #16305a; font-size: 7.500px; line-height: 14px; display: flex; align-items: center; gap: 5px; }
.plane { fill: #98a0ad; fill-opacity: .22; }
.cgrid { fill: none; stroke: #7f858c; stroke-width: .6; opacity: .5; }
.xaxis { stroke: #a03030; stroke-width: 1.200; }
.yaxis { stroke: #5d7c2c; stroke-width: 1; }
.pl { stroke: #942821; stroke-width: .8; }
.pts { font: 8.200px "Liberation Sans", sans-serif; fill: #a5451f; fill-opacity: .85; text-anchor: middle; }
.gizmo { font: 9px "Liberation Sans", sans-serif; fill: #555; }
.gizmo path { fill: none; stroke: #555; }
.view-tabs { height: 17px; padding-left: 43px; display: grid; grid-template-columns: 52px 22px 30px 28px 19px; gap: 2px; }
.view-tabs span { height: 14px; background: #cfd6ea; border: 1px solid #b8bfd0; border-top: 0; border-radius: 0 0 4px 6px; font-size: 7.700px; letter-spacing: -.1px; line-height: 15px; text-align: center; color: #333; }
.view-tabs .on { background: #fff; }
.view-tabs .plus { background: #e3e6ee; }
.osnap { height: 17px; margin-left: -4px; padding-left: 11px; display: grid; grid-template-columns: 29px 32.500px 32.500px 28px 29.500px 25px 31px 29.500px 34px 31px 37px 39px 40px; align-items: center; font-size: 7.200px; letter-spacing: -.1px; color: #333; }
.osnap label { display: flex; align-items: center; gap: 3px; }
.osnap b { width: 9px; height: 9px; background: #fff; border: 1px solid #555; flex: none; }
.osnap b.ck::after { content: ""; display: block; width: 5px; height: 2.500px; margin: 1px 0 0 1px; border: solid #222; border-width: 0 0 1px 1px; transform: rotate(-48deg); }
.osnap b.off { border-color: #ccc; background: #eceef3; }
.rh-status { height: 14px; display: grid; grid-template-columns: 37px 59px 59px 58px 59px 115px 51px 31px 36px 36px 57px 42px; background: #eef1f6; border-top: 1px solid #bbc0ca; font: 8.400px/13px "Liberation Sans", sans-serif; }
.rh-status span { text-align: center; border-right: 1px solid #bbc0ca; }
.rh-status .layer { display: flex; align-items: center; gap: 1px; padding-left: 2px; }
.rh-status i { width: 9px; height: 9px; background: #000; }
.rh-status .b { font: bold 8px/13px "Open Sans", sans-serif; letter-spacing: -.15px; background: #e3eefa; }

/* Grasshopper */
.gh { width: 639px; height: 691px; margin-top: 3px; display: flex; flex-direction: column; border: 1px solid #666; border-width: 1px 1px 0 1px; background: #f2f2f2; }
.gh-title { height: 20px; padding-left: 5px; display: flex; justify-content: space-between; background: #fff; font-size: 7.900px; letter-spacing: -.2px; line-height: 19px; }
.gh-menu { height: 15px; padding-left: 9px; display: grid; grid-template-columns: 23px 25px 28px 36px 38px 30px 1fr; font-size: 7.500px; letter-spacing: -.2px; line-height: 15px; color: #111; }
.doc { text-align: right; padding-right: 6px; }
.gh-tabs { height: 16px; display: grid; grid-template-columns: 37px 32px 25px 33px 30px 38px 28px 41px 44px 36px 43px 23px 40px; border-bottom: 1px solid #999; font-size: 7.500px; letter-spacing: -.15px; line-height: 17px; color: #777; }
.gh-tabs span { padding-left: 5px; }
.gh-tabs .on { padding-left: 4px; background: #fafafa; border: 1px solid #999; border-bottom: 0; border-radius: 4px 6px 0 0; color: #444; line-height: 13px; height: 16px; }
.ribbon { height: 58px; padding: 1px 0 0 1px; display: flex; gap: 2px; align-items: flex-start; background: linear-gradient(#d6d6d6, #f3f3f3); border-bottom: 1px solid #888; }
.panel { height: 49px; border: 1px solid #888; border-radius: 3px; background: linear-gradient(#e3e3e3, #cfcfcf); overflow: hidden; }
.geo { width: 129px; }
.prim { width: 41px; }
.inp { width: 92px; }
.util { width: 73px; }
.cap { height: 9px; background: #161616; color: #eee; font-size: 7.300px; letter-spacing: -.2px; line-height: 8px; text-align: center; position: relative; }
.prim .cap { letter-spacing: -.5px; padding-right: 7px; }
.cap i { position: absolute; right: 2px; top: 0; font-style: normal; }
.hexchar { fill: #fff; stroke: none; font: bold 8px "Liberation Sans", sans-serif; text-anchor: middle; }
.hexchar .big { font-size: 11px; }
.hexchar .ser { font: bold 11px "Liberation Serif", serif; }
.gh-bar { height: 22px; display: flex; align-items: center; gap: 2px; background: #fbfbfb; }
.zoom { width: 46px; height: 16px; border: 1px solid #888; background: #fff; padding: 0 3px 0 2px; display: flex; align-items: center; justify-content: space-between; font-size: 8.300px; }
.gh-bar .right { margin-left: auto; }
.canvas { height: 542px; overflow: hidden; background: #d6d1ca; }
.grid { stroke: #777; stroke-opacity: .28; }
.wire { fill: none; stroke: #4e4e48; stroke-width: 4.600; }
.wire.in { stroke: #bdb9ae; stroke-width: 2; }
.wire.dash { stroke-dasharray: 13.500 5; stroke-width: 5; stroke: #4f4f49; }
.wire.in.dash { stroke: #c4c0b6; stroke-width: 2; stroke-dasharray: 10.500 8; stroke-dashoffset: -1.500; }
.grips { fill: #fff; stroke: #111; stroke-width: 1.700; }
.port { font: 11px "Open Sans", sans-serif; fill: #333; text-anchor: middle; }
.comp { font: bold 13px "Open Sans", sans-serif; fill: #fff; text-anchor: middle; }
.mono { font: 11px "Liberation Mono", monospace; fill: #4c4c4c; }
.pdata { fill: #4b4c55; }
.ptitle { font: italic 11px "Open Sans", sans-serif; fill: #16161c; }
.gh-status { height: 16px; padding: 0 2px 0 4px; display: flex; justify-content: space-between; background: #f8f8f8; font-size: 7.200px; line-height: 18px; color: #777; }

/* taskbar */
.taskbar { height: 26px; display: flex; background: #02040c; color: #eee; }
.start { width: 32px; display: flex; align-items: center; justify-content: center; }
.search { width: 229px; padding-left: 8px; background: #333; color: #a5a5a5; font-size: 10px; letter-spacing: -.25px; line-height: 26px; }
.apps { display: flex; }
.app { width: 32.900px; display: flex; align-items: center; justify-content: center; }
.app.run { background: linear-gradient(#76a9dc, #76a9dc) center bottom / 27px 2px no-repeat; }
.app.cur { background-color: #3c3c3c; }
.ps { font: bold 8px "Open Sans", sans-serif; fill: #5bb8ee; text-anchor: middle; }
.tray { margin-left: auto; padding-right: 8px; display: flex; align-items: center; gap: 5px; font-size: 8px; letter-spacing: -.1px; }
.clock { margin-left: 4px; text-align: right; line-height: 10.500px; font-size: 7.600px; letter-spacing: -.1px; }
```
